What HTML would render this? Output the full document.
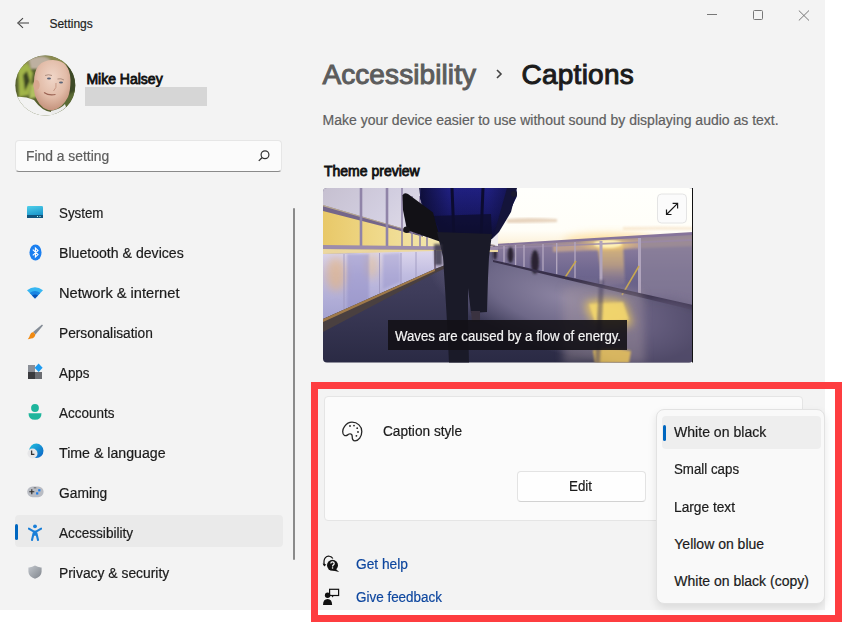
<!DOCTYPE html>
<html><head><meta charset="utf-8"><style>
html,body{margin:0;padding:0;}
body{width:842px;height:622px;position:relative;overflow:hidden;background:#ffffff;font-family:"Liberation Sans", sans-serif;}
.win{position:absolute;left:0;top:0;width:825px;height:610px;background:#f3f3f3;}
.a{position:absolute;}
.t{position:absolute;white-space:nowrap;}
.red{position:absolute;left:311px;top:382px;width:531px;height:240px;border:7px solid #fe3d40;box-sizing:border-box;}
</style></head><body>
<div class="win"></div>
<svg class="a" style="left:16px;top:16px" width="14" height="14" viewBox="0 0 14 14"><path d="M7 2.2 L1.8 7 L7 11.8" fill="none" stroke="#444" stroke-width="1.1"/><path d="M1.8 7 H13" fill="none" stroke="#666" stroke-width="1.3"/></svg><div class="t" style="left:49.4px;top:17.64px;font-size:12px;line-height:12px;color:#1f1f1f;font-weight:400;-webkit-text-stroke:0.2px #1f1f1f;">Settings</div>
<div class="a" style="left:707px;top:14px;width:10px;height:1px;background:#777"></div><div class="a" style="left:753px;top:10px;width:10px;height:10px;box-sizing:border-box;border:1px solid #777;border-radius:1.5px"></div><svg class="a" style="left:798px;top:10px" width="12" height="11" viewBox="0 0 12 11"><path d="M0.8 0.5 L11 10.5 M11 0.5 L0.8 10.5" stroke="#777" stroke-width="1"/></svg><svg class="a" style="left:15px;top:55px" width="61" height="61" viewBox="0 0 61 61">
<defs><clipPath id="cp"><circle cx="30.3" cy="30.6" r="30"/></clipPath>
<radialGradient id="face" cx="0.5" cy="0.35" r="0.65"><stop offset="0" stop-color="#f0d6c8"/><stop offset="0.6" stop-color="#e2bca8"/><stop offset="1" stop-color="#c4927c"/></radialGradient>
<filter id="abl"><feGaussianBlur stdDeviation="1.3"/></filter></defs>
<g clip-path="url(#cp)">
<rect width="61" height="61" fill="#56602e"/>
<g filter="url(#abl)">
<rect x="0" y="0" width="61" height="14" fill="#8a8a50"/>
<path d="M14 4 Q30 -2 36 6 L30 14 L16 14 Z" fill="#bdb0a0"/>
<path d="M3 14 L12 8 L18 18 L14 40 L4 42 Z" fill="#a0b448"/>
<path d="M8 20 L12 16 L15 26 L10 36 Z" fill="#3a4420"/>
<path d="M16 30 L22 26 L22 42 L14 44 Z" fill="#b0c060"/>
<rect x="50" y="10" width="11" height="45" fill="#3e4a26"/>
<path d="M44 44 L61 36 L61 61 L44 61 Z" fill="#5a6a34"/>
</g>
<path d="M19 27 Q19 5 38 5 Q55 5.5 55.5 25 Q55.5 36 53 42 Q47 54 37 55.5 Q27 55 22 45 Q18 38 19 27 Z" fill="url(#face)"/>
<ellipse cx="21.5" cy="30" rx="3.2" ry="5" fill="#d8a890"/>
<path d="M30 20.5 Q33.5 19 37 20.5 M42.5 24 Q46 23 49 25" fill="none" stroke="#a88878" stroke-width="0.9"/>
<ellipse cx="34" cy="23.5" rx="2" ry="1.1" fill="#5a6478"/>
<ellipse cx="46" cy="27.5" rx="2" ry="1.1" fill="#5a6478"/>
<path d="M41 28 Q42 33 38.5 36" fill="none" stroke="#c49480" stroke-width="0.9"/>
<path d="M29 37.5 Q34 41 40.5 39.5" fill="none" stroke="#9c6454" stroke-width="1.2"/>
<path d="M0 42 Q10 41 19 45 Q27 56 36 57 L42 61 L0 61 Z" fill="#f2f2f2"/>
<path d="M36 56 Q46 54 50 49 L54 61 L36 61 Z" fill="#ececec"/>
</g></svg><div class="t" style="left:86.4px;top:72.15px;font-size:14px;line-height:14px;color:#111111;font-weight:400;transform:scaleX(1.0);transform-origin:0 0;-webkit-text-stroke:0.8px #111111;">Mike Halsey</div>
<div class="a" style="left:85px;top:87px;width:122px;height:19px;background:#d6d6d6"></div><div class="a" style="left:15px;top:140px;width:267px;height:32px;background:#fbfbfb;border-radius:4px;border:1px solid #e6e6e6;border-bottom:1px solid #8a8a8a;box-sizing:border-box"></div><div class="t" style="left:25.8px;top:148.95px;font-size:14px;line-height:14px;color:#5d5d5d;font-weight:400;transform:scaleX(0.99);transform-origin:0 0;-webkit-text-stroke:0.2px #5d5d5d;">Find a setting</div>
<svg class="a" style="left:256px;top:148px" width="14" height="14" viewBox="0 0 14 14"><circle cx="9" cy="6.7" r="3.9" fill="none" stroke="#333" stroke-width="1.2"/><path d="M6.2 9.5 L2.8 12.9" stroke="#333" stroke-width="1.3"/></svg><div class="a" style="left:15px;top:515px;width:268px;height:32px;background:#eaeaea;border-radius:4px"></div><div class="a" style="left:15px;top:524px;width:3px;height:16px;background:#0067c0;border-radius:2px"></div><div class="t" style="left:59.3px;top:206.15px;font-size:14px;line-height:14px;color:#1b1b1b;font-weight:400;transform:scaleX(0.951);transform-origin:0 0;-webkit-text-stroke:0.2px #1b1b1b;">System</div>
<div class="t" style="left:59.3px;top:246.15px;font-size:14px;line-height:14px;color:#1b1b1b;font-weight:400;transform:scaleX(1.008);transform-origin:0 0;-webkit-text-stroke:0.2px #1b1b1b;">Bluetooth &amp; devices</div>
<div class="t" style="left:59.3px;top:286.15px;font-size:14px;line-height:14px;color:#1b1b1b;font-weight:400;transform:scaleX(1.046);transform-origin:0 0;-webkit-text-stroke:0.2px #1b1b1b;">Network &amp; internet</div>
<div class="t" style="left:59.3px;top:326.15px;font-size:14px;line-height:14px;color:#1b1b1b;font-weight:400;transform:scaleX(0.98);transform-origin:0 0;-webkit-text-stroke:0.2px #1b1b1b;">Personalisation</div>
<div class="t" style="left:59.3px;top:366.15px;font-size:14px;line-height:14px;color:#1b1b1b;font-weight:400;transform:scaleX(0.956);transform-origin:0 0;-webkit-text-stroke:0.2px #1b1b1b;">Apps</div>
<div class="t" style="left:59.3px;top:406.15px;font-size:14px;line-height:14px;color:#1b1b1b;font-weight:400;transform:scaleX(0.962);transform-origin:0 0;-webkit-text-stroke:0.2px #1b1b1b;">Accounts</div>
<div class="t" style="left:59.3px;top:446.15px;font-size:14px;line-height:14px;color:#1b1b1b;font-weight:400;transform:scaleX(1.012);transform-origin:0 0;-webkit-text-stroke:0.2px #1b1b1b;">Time &amp; language</div>
<div class="t" style="left:59.3px;top:486.15px;font-size:14px;line-height:14px;color:#1b1b1b;font-weight:400;transform:scaleX(0.985);transform-origin:0 0;-webkit-text-stroke:0.2px #1b1b1b;">Gaming</div>
<div class="t" style="left:59.3px;top:526.15px;font-size:14px;line-height:14px;color:#1b1b1b;font-weight:400;transform:scaleX(0.972);transform-origin:0 0;-webkit-text-stroke:0.2px #1b1b1b;">Accessibility</div>
<div class="t" style="left:59.3px;top:566.15px;font-size:14px;line-height:14px;color:#1b1b1b;font-weight:400;transform:scaleX(0.991);transform-origin:0 0;-webkit-text-stroke:0.2px #1b1b1b;">Privacy &amp; security</div>
<div class="a" style="left:293px;top:208px;width:2px;height:352px;background:#8a8a8a;border-radius:1px"></div><svg class="a" style="left:27px;top:206px" width="16" height="12" viewBox="0 0 16 12"><defs><linearGradient id="sg" x1="0" y1="0" x2="0.3" y2="1"><stop offset="0" stop-color="#4fd0ea"/><stop offset="1" stop-color="#1590c8"/></linearGradient></defs><rect width="16" height="12" rx="1.3" fill="url(#sg)"/><rect y="9" width="16" height="3" fill="#10557e"/><rect x="10" y="10" width="1" height="1" fill="#bfe"/><rect x="12.5" y="10" width="1" height="1" fill="#bfe"/></svg><svg class="a" style="left:28.5px;top:243.5px" width="13" height="17" viewBox="0 0 13 17"><ellipse cx="6.5" cy="8.5" rx="6" ry="8" fill="#1a7ff0"/><path d="M3.8 5.6 L9 10.6 L6.4 13 V4 L9 6.4 L3.8 11.4" fill="none" stroke="#fff" stroke-width="1.1"/></svg><svg class="a" style="left:27px;top:286.5px" width="16" height="12" viewBox="0 0 16 12"><path d="M0 3.2 Q8 -2.6 16 3.2 L8 11.5 Z" fill="#36b6f2"/><path d="M2.7 6 Q8 2 13.3 6 L8 11.5 Z" fill="#1a86e2"/><path d="M5 8.4 Q8 6.4 11 8.4 L8 11.5 Z" fill="#0a55b8"/></svg><svg class="a" style="left:26px;top:323px" width="18" height="18" viewBox="0 0 18 18"><path d="M16 1.5 L17 2.5 L9.5 11.5 L7 9 Z" fill="#848c96"/><path d="M7.2 9 L9.4 11.4 Q9 15 5 15.6 Q3 16 1.8 16.3 Q3.6 14 4 12 Q4.6 9.5 7.2 9 Z" fill="#f08a12"/></svg><svg class="a" style="left:27px;top:363px" width="16" height="17" viewBox="0 0 16 17"><rect x="1" y="2" width="7" height="7" fill="#8a8e96"/><rect x="1" y="9" width="7" height="7" fill="#3a3b3e"/><rect x="8" y="9" width="7" height="7" fill="#6b6d72"/><path d="M11.6 0.6 L15.6 4.8 L11.6 9 L7.6 4.8 Z" fill="#1d9bf0"/></svg><svg class="a" style="left:28px;top:403px" width="14" height="17" viewBox="0 0 14 17"><circle cx="7" cy="5" r="3.9" fill="#1db59c"/><path d="M0.5 10.2 H13.5 Q13.5 16.8 7 16.8 Q0.5 16.8 0.5 10.2 Z" fill="#1db59c"/></svg><svg class="a" style="left:27px;top:443px" width="17" height="16" viewBox="0 0 17 16"><defs><linearGradient id="tg" x1="0" y1="0" x2="1" y2="1"><stop offset="0" stop-color="#22c3e0"/><stop offset="1" stop-color="#0a5dc4"/></linearGradient></defs><circle cx="9.3" cy="7.8" r="7.2" fill="url(#tg)"/><circle cx="5.5" cy="10.5" r="5" fill="#e6e6e8"/><path d="M4.6 7.6 V11.4 H7.4" fill="none" stroke="#333" stroke-width="1.3"/></svg><svg class="a" style="left:27px;top:485.5px" width="17" height="12" viewBox="0 0 17 12"><rect x="0.2" y="0.4" width="16.4" height="10.8" rx="5.4" fill="#b9bcc3"/><path d="M2.3 5.8 H7.3 M4.8 3.3 V8.3" stroke="#2a2a2a" stroke-width="1.1"/><rect x="11.2" y="3.2" width="2.2" height="2.2" fill="#1a7ae8"/><rect x="9.1" y="6.3" width="2.2" height="2.2" fill="#1a7ae8"/><rect x="6.8" y="1.4" width="0.9" height="0.9" fill="#333"/><rect x="8.3" y="1.4" width="0.9" height="0.9" fill="#333"/></svg><svg class="a" style="left:28px;top:523.5px" width="14" height="17" viewBox="0 0 14 17"><circle cx="7" cy="2.3" r="1.9" fill="#1a7fd8"/><path d="M0.8 4.6 L6 7.6 L4 16 M13.2 4.6 L8 7.6 L10 16 M6 7.6 H8 V10.6 H6 Z" fill="none" stroke="#1a7fd8" stroke-width="2.1" stroke-linejoin="round" stroke-linecap="round"/></svg><svg class="a" style="left:28px;top:565px" width="14" height="14" viewBox="0 0 14 14"><defs><linearGradient id="pg" x1="0" y1="0" x2="1" y2="1"><stop offset="0" stop-color="#c2c6cc"/><stop offset="1" stop-color="#80858c"/></linearGradient></defs><path d="M7 0.6 Q10 2.6 13.6 2.4 V6.8 Q13.4 11.6 7 13.8 Q0.6 11.6 0.4 6.8 V2.4 Q4 2.6 7 0.6 Z" fill="url(#pg)"/></svg><div class="t" style="left:322.4px;top:60.80px;font-size:28px;line-height:28px;color:#5c5c5c;font-weight:400;letter-spacing:0.1px;-webkit-text-stroke:1.0px #5c5c5c;">Accessibility</div>
<svg class="a" style="left:494px;top:68px" width="10" height="12" viewBox="0 0 10 12"><path d="M3 2 L7 6 L3 10" fill="none" stroke="#444" stroke-width="1.6"/></svg><div class="t" style="left:521.5px;top:60.80px;font-size:28px;line-height:28px;color:#1b1b1b;font-weight:400;letter-spacing:0.25px;-webkit-text-stroke:1.0px #1b1b1b;">Captions</div>
<div class="t" style="left:322.6px;top:113.35px;font-size:14px;line-height:14px;color:#5f5f5f;font-weight:400;transform:scaleX(1.0);transform-origin:0 0;-webkit-text-stroke:0.2px #5f5f5f;">Make your device easier to use without sound by displaying audio as text.</div>
<div class="t" style="left:324px;top:163.85px;font-size:14px;line-height:14px;color:#111111;font-weight:400;-webkit-text-stroke:0.8px #111111;">Theme preview</div>
<svg class="a" style="left:323px;top:188px" width="370" height="175" viewBox="0 0 370 175">
<defs>
<clipPath id="pc"><rect width="370" height="174.5" rx="4"/></clipPath>
<linearGradient id="sky" x1="0" y1="0" x2="0" y2="1"><stop offset="0" stop-color="#fffffc"/><stop offset="0.7" stop-color="#fffef8"/><stop offset="0.88" stop-color="#fdf4e0"/><stop offset="1" stop-color="#f8e4b8"/></linearGradient>
<linearGradient id="floor" x1="0" y1="0" x2="0" y2="1"><stop offset="0" stop-color="#545270"/><stop offset="0.6" stop-color="#3e3c5a"/><stop offset="1" stop-color="#2a2a44"/></linearGradient>
<radialGradient id="flight" cx="0.5" cy="0.5" r="0.5"><stop offset="0" stop-color="#8c84a2"/><stop offset="0.55" stop-color="#6e6888"/><stop offset="1" stop-color="#6e6888" stop-opacity="0"/></radialGradient>
<linearGradient id="sea" x1="0" y1="0" x2="0" y2="1"><stop offset="0" stop-color="#c0a488"/><stop offset="0.2" stop-color="#887a9c"/><stop offset="0.5" stop-color="#706890"/><stop offset="1" stop-color="#5c5680"/></linearGradient>
<linearGradient id="topwin" x1="0" y1="0" x2="1" y2="0.3"><stop offset="0" stop-color="#c6c0d0"/><stop offset="0.4" stop-color="#d2cee0"/><stop offset="0.7" stop-color="#e0dce8"/><stop offset="1" stop-color="#f0ecf0"/></linearGradient>
<linearGradient id="yelwin" x1="0" y1="0" x2="1" y2="0"><stop offset="0" stop-color="#e8c868"/><stop offset="0.3" stop-color="#efd888"/><stop offset="0.6" stop-color="#f2e4a8"/><stop offset="1" stop-color="#f4eac0"/></linearGradient>
<linearGradient id="panel" x1="0" y1="0" x2="0" y2="1"><stop offset="0" stop-color="#dcd6ec"/><stop offset="0.35" stop-color="#c0bce0"/><stop offset="1" stop-color="#a4a2d0"/></linearGradient>
<radialGradient id="glow" cx="0.5" cy="0.5" r="0.5"><stop offset="0" stop-color="#fff0a0" stop-opacity="1"/><stop offset="1" stop-color="#ffd060" stop-opacity="0"/></radialGradient>
<linearGradient id="pack" x1="0" y1="0" x2="0" y2="1"><stop offset="0" stop-color="#22228a"/><stop offset="0.5" stop-color="#1a1a6c"/><stop offset="1" stop-color="#0e0e30"/></linearGradient>
<linearGradient id="suncol" x1="0" y1="0" x2="0" y2="1"><stop offset="0" stop-color="#f4cc70"/><stop offset="0.5" stop-color="#c8a880"/><stop offset="1" stop-color="#9a88a0" stop-opacity="0.3"/></linearGradient>
<linearGradient id="packedge" x1="0" y1="0" x2="1" y2="0"><stop offset="0" stop-color="#0a0a28" stop-opacity="0.8"/><stop offset="0.3" stop-color="#0a0a28" stop-opacity="0.1"/><stop offset="0.7" stop-color="#0a0a28" stop-opacity="0.1"/><stop offset="1" stop-color="#0a0a28" stop-opacity="0.7"/></linearGradient>
<filter id="bl" x="-20%" y="-20%" width="140%" height="140%"><feGaussianBlur stdDeviation="1.2"/></filter>
<filter id="bl2" x="-50%" y="-50%" width="200%" height="200%"><feGaussianBlur stdDeviation="4"/></filter>
</defs>
<g clip-path="url(#pc)">
<rect width="370" height="175" fill="url(#floor)"/>
<ellipse cx="240" cy="110" rx="140" ry="55" fill="url(#flight)" transform="rotate(16 240 110)"/>
<!-- sky -->
<rect x="100" y="0" width="270" height="60" fill="url(#sky)"/>
<path d="M184 31 Q205 29 234 31 L234 34 Q205 35 184 35 Z" fill="#d8b898" opacity="0.6" filter="url(#bl)"/>
<path d="M300 39 Q335 38 370 39 L370 42 Q335 42 300 42 Z" fill="#f0d0a8" opacity="0.4" filter="url(#bl)"/>
<ellipse cx="286" cy="53" rx="45" ry="8" fill="#ffd070" opacity="0.5" filter="url(#bl2)"/>
<!-- sea behind rail -->
<path d="M170 58 L370 45 L370 120 L170 73 Z" fill="url(#sea)"/>
<path d="M230 57 L370 49 L370 58 L230 64 Z" fill="#e0b888" opacity="0.6" filter="url(#bl)"/>
<ellipse cx="284" cy="56" rx="30" ry="8" fill="url(#glow)" filter="url(#bl)"/>
<path d="M274 56 L300 56 L302 96 L280 98 Z" fill="url(#suncol)" opacity="0.75" filter="url(#bl)"/>
<ellipse cx="285" cy="56" rx="14" ry="4" fill="#fff2b8" filter="url(#bl)"/>
<!-- mesh on right -->
<path d="M318 50 L370 46 L370 120 L318 106 Z" fill="#8a8098" opacity="0.7"/>
<!-- rails -->
<path d="M172 56 L370 44 L370 47 L172 58 Z" fill="#86749a"/>
<path d="M172 59.5 L370 51 L370 53 L172 61 Z" fill="#9a88a8" opacity="0.8"/>
<!-- posts -->
<g stroke="#b4a8c0" stroke-width="1.3">
<line x1="181" y1="58" x2="181" y2="75"/><line x1="192.6" y1="57" x2="192.6" y2="77"/><line x1="201" y1="57" x2="201" y2="79"/><line x1="220" y1="56" x2="220" y2="83"/><line x1="233.7" y1="55" x2="233.7" y2="86"/><line x1="252" y1="54" x2="252" y2="90"/>
</g>
<g stroke="#b0a4bc" stroke-width="3"><line x1="278" y1="53" x2="278" y2="96"/><line x1="316.5" y1="50" x2="316.5" y2="107"/></g>
<g stroke="#c8a850" stroke-width="1.5"><line x1="241" y1="91" x2="253" y2="73"/><line x1="299" y1="107" x2="316" y2="78"/></g>
<g fill="#2a2430" filter="url(#bl)"><ellipse cx="172" cy="66" rx="2" ry="6"/><ellipse cx="187.5" cy="67" rx="3" ry="8"/><ellipse cx="212" cy="74" rx="4" ry="12"/></g>
<!-- deck edge -->
<path d="M170 72 L370 117 L370 122 L170 74 Z" fill="#38304a"/>
<!-- floor reflections -->
<ellipse cx="335" cy="150" rx="60" ry="40" fill="#6a6080" opacity="0.6" filter="url(#bl2)"/>
<path d="M240 100 Q280 92 320 104 L322 175 L240 175 Z" fill="#a898a0" opacity="0.4" filter="url(#bl2)"/>
<path d="M262 114 Q285 108 302 114 L310 136 Q298 142 280 140 Q264 134 262 114 Z" fill="#f0cc58" opacity="0.8" filter="url(#bl2)"/>
<path d="M266 116 L300 114 L306 132 L272 134 Z" fill="#f8dc70" opacity="0.75" filter="url(#bl)"/>
<path d="M270 162 Q290 158 308 163 L306 175 L272 175 Z" fill="#f0c858" opacity="0.8" filter="url(#bl)"/>
<path d="M276 92 L281 92 L277 175 L272 175 Z" fill="#4a4260" opacity="0.5" filter="url(#bl)"/>
<!-- left wall: top windows -->
<path d="M0 0 H175 V58 L112 50 L0 18 Z" fill="url(#topwin)"/>
<!-- yellow windows -->
<path d="M0 21 L112 52 L175 60 V62 L0 59 Z" fill="url(#yelwin)"/>
<!-- handrail -->
<path d="M0 17 L80 40.5 L112 48 L172 57 L172 59 L112 50.5 L80 43.4 L0 23 Z" fill="#74668a"/>
<path d="M0 17 L80 40.5 L112 48 L172 57 L172 57.8 L112 48.8 L80 41.3 L0 18.2 Z" fill="#d8c890" opacity="0.7"/>
<!-- mullions -->
<g stroke="#9084a8" stroke-width="2.6"><line x1="38" y1="0" x2="38" y2="58"/><line x1="64" y1="0" x2="64" y2="59"/></g>
<g stroke="#9084a8" stroke-width="1.6"><line x1="79" y1="0" x2="79" y2="59"/><line x1="89" y1="8" x2="89" y2="60"/><line x1="97" y1="8" x2="97" y2="60"/><line x1="104" y1="30" x2="104" y2="60"/></g>
<!-- ledge -->
<path d="M0 57 L175 59 L175 62 L0 61 Z" fill="#9c8cac"/>
<path d="M0 61 L175 62 L175 64 L0 66 Z" fill="#ecd8a0"/>
<!-- wall panel -->
<path d="M0 66 L112 63 L112 81 L0 131 Z" fill="url(#panel)"/>
<path d="M112 63 L125 63 L125 76 L112 81 Z" fill="#b8b0cc"/>
<ellipse cx="13" cy="86" rx="10" ry="17" fill="#e8b478" opacity="0.6" filter="url(#bl2)"/>
<ellipse cx="49" cy="78" rx="6" ry="13" fill="#e8c088" opacity="0.55" filter="url(#bl2)"/>
<path d="M24 66 L46 66 L46 112 L24 122 Z" fill="#8c88c4" opacity="0.45" filter="url(#bl)"/>
<path d="M60 66 L77 65 L77 94 L60 101 Z" fill="#8c88c4" opacity="0.35" filter="url(#bl)"/>
<g stroke="#9a94bc" stroke-width="1" opacity="0.8"><line x1="21" y1="66" x2="21" y2="122"/><line x1="56.5" y1="65" x2="56.5" y2="106"/><line x1="78" y1="65" x2="78" y2="96"/><line x1="93" y1="64" x2="93" y2="89"/></g>
<line x1="112" y1="62" x2="112" y2="82" stroke="#6a5a70" stroke-width="1.5"/>
<!-- baseboard -->
<path d="M0 131 L112 81 L125 76 L125 79 L112 85 L0 144 Z" fill="#4a4040"/>
<path d="M0 131 L112 81 L112 83 L0 134 Z" fill="#d8a050" opacity="0.6"/>
<!-- person: sleeve -->
<path d="M96 0 H112 V30 L100 28 Z" fill="#2a2a50"/>
<!-- backpack -->
<path d="M98 0 H192 Q196 6 192 12 L182 33 L169 51 L120 50 L110 44 L97 10 Z" fill="url(#pack)"/>
<path d="M98 0 H192 Q196 6 192 12 L182 33 L169 51 L120 50 L110 44 L97 10 Z" fill="url(#packedge)"/>
<path d="M129 0 L131 50 M160 0 L158 50" stroke="#0c0c30" stroke-width="3"/>
<path d="M184 0 H194 L188 24 L176 44 L170 50 Z" fill="#14143a"/>
<circle cx="191" cy="6" r="3" fill="#1a1a30"/>
<path d="M110 28 L168 26 L169 51 L120 50 Z" fill="#0e0e2e" opacity="0.8"/>
<!-- tube/bag -->
<path d="M79.5 7.4 Q81 4 85 6 L110 24.6 L118 54 L84 42 L80 22 Z" fill="#121116"/>
<circle cx="83.6" cy="41.8" r="3.3" fill="#18161a"/>
<!-- torso / legs -->
<path d="M114 44 L169 46 L166 69 L165 90 L164 124 L148 125 L145 100 L145 135 L146 175 L126 175 L124 134 L122 100 L120 69 Z" fill="#1a1a28"/>
<path d="M148 123 L157 123 L157 134 L149 134 Z" fill="#3a3240"/>
<path d="M111 56 L119 56 L119 77 L112 77 Z" fill="#3a3848" opacity="0.8" filter="url(#bl)"/>
<!-- caption box -->
<rect x="65" y="132" width="239" height="30" fill="#131116" opacity="0.9"/>
<!-- expand button -->
<rect x="334.5" y="6" width="29" height="29" rx="4" fill="#fbfbfb" stroke="#e4e4e4" stroke-width="1"/>
<path d="M343.5 26.5 L354.6 15.4 M343.5 21.5 V26.5 H348.5 M349.6 15.4 H354.6 V20.4" fill="none" stroke="#1a1a1a" stroke-width="1.2"/>
</g>
<rect x="369" y="0" width="1" height="174.5" fill="#111"/>
</svg>
<div class="t" style="left:394.6px;top:329.25px;font-size:14px;line-height:14px;color:#f4f4f4;font-weight:400;transform:scaleX(0.943);transform-origin:0 0;-webkit-text-stroke:0.2px #f4f4f4;">Waves are caused by a flow of energy.</div>
<div class="a" style="left:323.5px;top:395.5px;width:479px;height:125px;background:#fbfbfb;border:1px solid #e5e5e5;border-radius:4px;box-sizing:border-box"></div><svg class="a" style="left:341px;top:421px" width="22" height="21" viewBox="0 0 22 21"><path d="M11 1.2 C16.5 1.2 20.8 5.2 20.8 10.4 C20.8 15.6 17.5 19.8 14 19.8 C11.4 19.8 11.2 17.8 11.2 15.4 C11.2 13.4 10 12.4 8.2 13 C6.4 13.7 5.6 15.6 3.4 14.4 C1 13 1.2 8.6 3.6 5.4 C5.4 2.9 8.2 1.2 11 1.2 Z" fill="none" stroke="#262626" stroke-width="1.3"/><circle cx="9" cy="5" r="0.9" fill="#262626"/><circle cx="13" cy="4.6" r="0.9" fill="#262626"/><circle cx="16.2" cy="7.2" r="0.9" fill="#262626"/><circle cx="17" cy="11" r="0.9" fill="#262626"/><circle cx="15.4" cy="14.8" r="0.9" fill="#262626"/></svg><div class="t" style="left:382.6px;top:424.25px;font-size:14px;line-height:14px;color:#1b1b1b;font-weight:400;transform:scaleX(0.976);transform-origin:0 0;-webkit-text-stroke:0.2px #1b1b1b;">Caption style</div>
<div class="a" style="left:516.5px;top:470.5px;width:129px;height:31px;background:#fefefe;border:1px solid #e3e3e3;border-bottom-color:#d2d2d2;border-radius:4px;box-sizing:border-box"></div><div class="t" style="left:569.4px;top:479.25px;font-size:14px;line-height:14px;color:#1b1b1b;font-weight:400;transform:scaleX(0.953);transform-origin:0 0;-webkit-text-stroke:0.2px #1b1b1b;">Edit</div>
<svg class="a" style="left:320px;top:552px" width="24" height="24" viewBox="0 0 24 24"><path d="M12.8 6.6 C11.4 3.8 7.4 3.4 5.4 5.6 C3.8 7.4 3.8 10.4 4.3 12.8" fill="none" stroke="#111" stroke-width="1.2"/><path d="M2.6 11.6 L4.2 14.4 L6.4 12.4 Z" fill="#111"/><circle cx="12.5" cy="13.3" r="5.5" fill="#111"/><path d="M15.2 16.6 L19.2 19.9 L12.8 18.6 Z" fill="#111"/><path d="M10.8 11.6 Q10.8 9.9 12.5 9.9 Q14.2 9.9 14.2 11.5 Q14.2 12.5 13.1 13.1 Q12.6 13.4 12.6 14.4" fill="none" stroke="#fff" stroke-width="1.2"/><rect x="11.9" y="15.3" width="1.3" height="1.3" fill="#fff"/></svg><svg class="a" style="left:320px;top:585px" width="24" height="24" viewBox="0 0 24 24"><rect x="9.6" y="4.3" width="9" height="6.2" fill="none" stroke="#111" stroke-width="1.2"/><path d="M11.4 10.4 L12.6 12.6 L13.8 10.4 Z" fill="#111"/><circle cx="7.6" cy="10.2" r="2.7" fill="#111"/><path d="M3 20 Q3 14 7.6 14 Q12.1 14 12.1 20 Z" fill="#111"/></svg><div class="t" style="left:356.2px;top:557.25px;font-size:14px;line-height:14px;color:#0d469e;font-weight:400;transform:scaleX(0.982);transform-origin:0 0;-webkit-text-stroke:0.2px #0d469e;">Get help</div>
<div class="t" style="left:356.2px;top:589.65px;font-size:14px;line-height:14px;color:#0d469e;font-weight:400;transform:scaleX(0.961);transform-origin:0 0;-webkit-text-stroke:0.2px #0d469e;">Give feedback</div>
<div class="a" style="left:656px;top:409px;width:169px;height:194.5px;background:#f9f9f9;border:1px solid #e2e2e2;border-radius:8px;box-shadow:0 4px 8px rgba(0,0,0,0.10);box-sizing:border-box"></div><div class="a" style="left:662px;top:416px;width:158.5px;height:33px;background:#eeeeee;border-radius:4px"></div><div class="a" style="left:663px;top:424.5px;width:3px;height:16px;background:#0067c0;border-radius:2px"></div><div class="t" style="left:674.3px;top:425.15px;font-size:14px;line-height:14px;color:#1b1b1b;font-weight:400;transform:scaleX(1.005);transform-origin:0 0;-webkit-text-stroke:0.2px #1b1b1b;">White on black</div>
<div class="t" style="left:674.3px;top:462.35px;font-size:14px;line-height:14px;color:#1b1b1b;font-weight:400;transform:scaleX(0.95);transform-origin:0 0;-webkit-text-stroke:0.2px #1b1b1b;">Small caps</div>
<div class="t" style="left:674.3px;top:499.55px;font-size:14px;line-height:14px;color:#1b1b1b;font-weight:400;transform:scaleX(0.98);transform-origin:0 0;-webkit-text-stroke:0.2px #1b1b1b;">Large text</div>
<div class="t" style="left:674.3px;top:536.75px;font-size:14px;line-height:14px;color:#1b1b1b;font-weight:400;transform:scaleX(1.0);transform-origin:0 0;-webkit-text-stroke:0.2px #1b1b1b;">Yellow on blue</div>
<div class="t" style="left:674.3px;top:573.95px;font-size:14px;line-height:14px;color:#1b1b1b;font-weight:400;transform:scaleX(1.0);transform-origin:0 0;-webkit-text-stroke:0.2px #1b1b1b;">White on black (copy)</div>

<div class="red"></div>
</body></html>
